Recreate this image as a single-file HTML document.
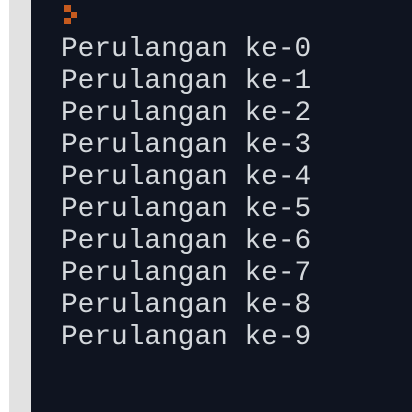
<html><body style="margin:0;width:412px;height:412px;background:#fff;position:relative;overflow:hidden">
<div style="position:absolute;left:9px;top:0;width:22px;height:412px;background:#e2e2e2"></div>
<div style="position:absolute;left:31px;top:0;width:381px;height:412px;background:#0f1420"></div>
<div style="position:absolute;left:64px;top:5px;width:7px;height:7px;background:#c55a1e"></div>
<div style="position:absolute;left:71px;top:12px;width:6px;height:6px;background:#c55a1e"></div>
<div style="position:absolute;left:64px;top:18px;width:7px;height:6px;background:#c55a1e"></div>
<pre style="position:absolute;left:61px;top:34px;margin:0;font:27.8px/32px 'Liberation Mono',monospace;color:#d4d8dc">Perulangan ke-0
Perulangan ke-1
Perulangan ke-2
Perulangan ke-3
Perulangan ke-4
Perulangan ke-5
Perulangan ke-6
Perulangan ke-7
Perulangan ke-8
Perulangan ke-9</pre>
</body></html>
